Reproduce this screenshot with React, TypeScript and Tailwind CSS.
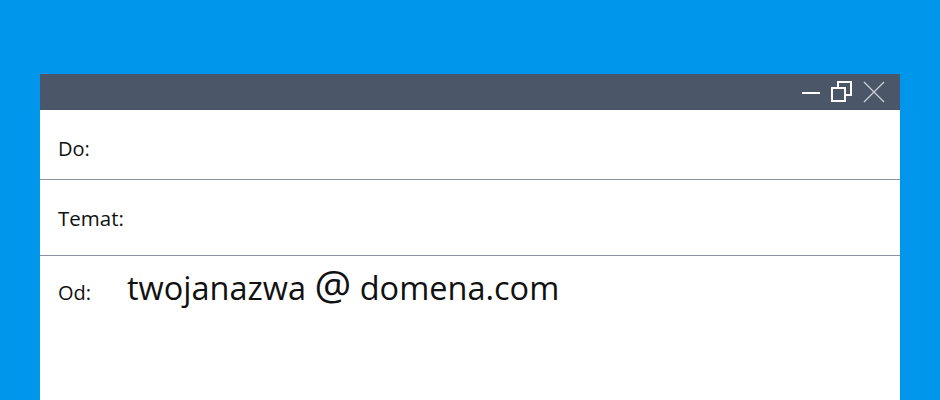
export default function App() {
  return (
    <div className="h-[400px] w-[940px] overflow-hidden bg-[#0096eb] px-10 pt-[74px] font-['Open_Sans',sans-serif]">
      <div className="h-[326px] bg-white">
        <div className="flex h-[36px] items-center justify-end gap-[10px] bg-[#4b5669] pr-[15px]">
          <svg width="20" height="20" viewBox="0 0 20 20" className="text-white">
            <line x1="1" y1="11" x2="19" y2="11" stroke="currentColor" strokeWidth="2" />
          </svg>
          <svg width="22" height="22" viewBox="0 0 22 22" className="text-white">
            <rect x="7" y="1" width="13" height="13" fill="none" stroke="currentColor" strokeWidth="2" />
            <rect x="1" y="7" width="13" height="13" fill="#4b5669" stroke="currentColor" strokeWidth="2" />
          </svg>
          <svg width="22" height="22" viewBox="0 0 22 22" className="text-[#c9ced6]">
            <path d="M1 1 L21 21 M21 1 L1 21" stroke="currentColor" strokeWidth="1.3" />
          </svg>
        </div>
        <div className="flex h-[70px] items-center border-b border-[#8c93a0] pl-[18px] pt-[8px] text-[20px] text-[#111]">
          Do:
        </div>
        <div className="flex h-[76px] items-center border-b border-[#8c93a0] pl-[18px] pt-[2px] text-[20.5px] text-[#111]">
          Temat:
        </div>
        <div className="flex items-baseline pl-[18px] pt-[9px] leading-[38px] text-[#111]">
          <span className="w-[69px] text-[20px]">Od:</span>
          <span className="text-[32.5px]">
            twojanazwa <span className="text-[41px]">@</span> domena.com
          </span>
        </div>
      </div>
    </div>
  )
}
